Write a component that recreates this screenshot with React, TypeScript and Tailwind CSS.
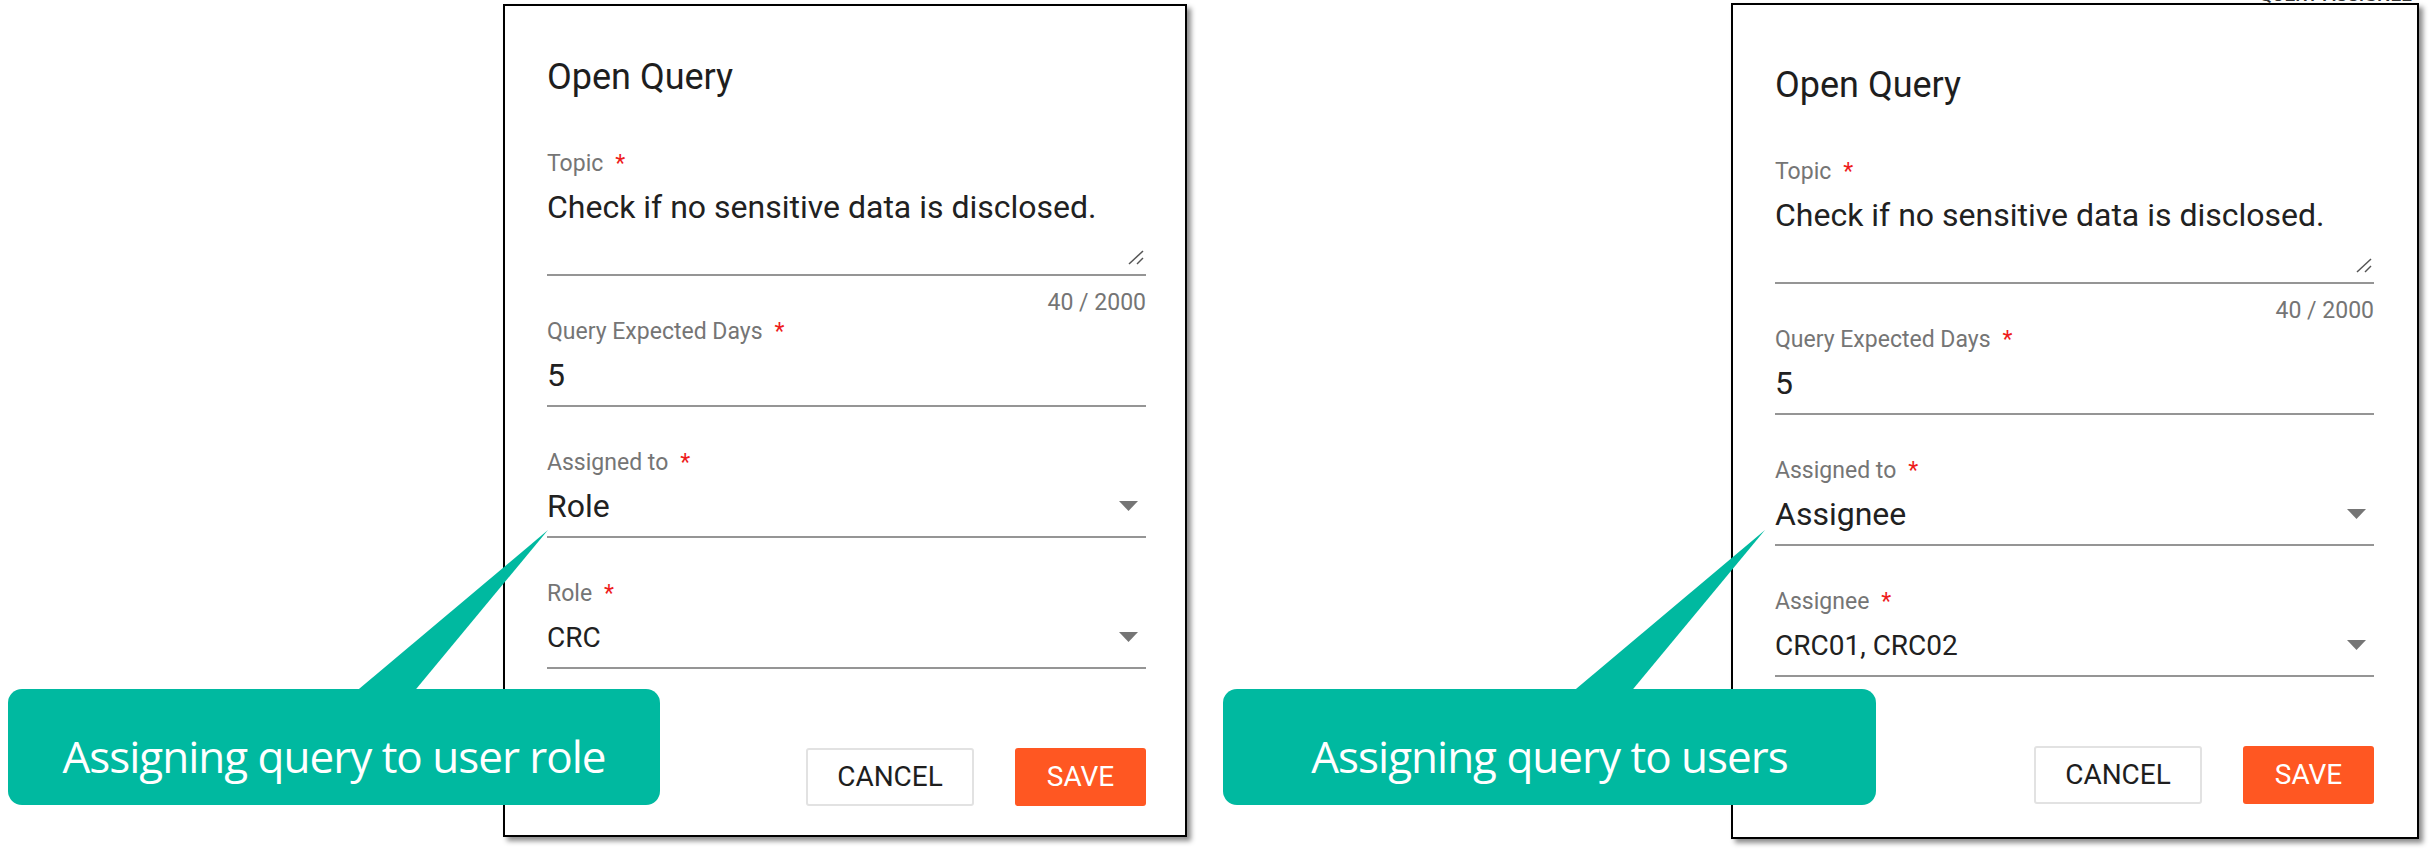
const roboto = "font-['Roboto',_'Liberation_Sans',_sans-serif]";

const Arrow = () => (
  <svg width="19" height="10" viewBox="0 0 19 10" className="mr-[8px] self-center">
    <polygon points="0,0 19,0 9.5,10" fill="#757575" />
  </svg>
);

const Label = ({ text }: { text: string }) => (
  <div className="h-[23px] text-[23px] leading-[23px] text-[#757575]">
    {text}
    <span className="ml-[12px] text-[#ee1c1c]">*</span>
  </div>
);

const Underline = () => <div className="h-[2px] bg-[#959595]" />;

type FieldProps = { label: string; value: string; big?: boolean; select?: boolean };

const Field = ({ label, value, big, select }: FieldProps) => (
  <div className="flex flex-col">
    <Label text={label} />
    <div className="mt-[16px] flex h-[32px] items-start justify-between text-[#212121]">
      <span className={big ? "text-[32px] leading-[32px]" : "text-[28px] leading-[34px]"}>{value}</span>
      {select && <Arrow />}
    </div>
    <div className="mt-[14px]">
      <Underline />
    </div>
  </div>
);

type CardProps = {
  top: string;
  cardClass: string;
  assigned: string;
  second: string;
  secondValue: string;
};

const QueryCard = ({ top, cardClass, assigned, second, secondValue }: CardProps) => (
  <div
    className={`${cardClass} ${top} ${roboto} flex flex-col border-2 border-black bg-white pl-[42px] shadow-[4px_4px_5px_rgba(0,0,0,0.45)]`}
  >
    <h2 className="text-[36px] leading-[36px] font-normal text-[#1e1e1e]">Open Query</h2>

    {/* topic textarea */}
    <div className="mt-[57px] flex flex-col">
      <Label text="Topic" />
      <div className="mt-[16px] h-[32px] text-[32px] leading-[32px] text-[#212121]">
        Check if no sensitive data is disclosed.
      </div>
      <div className="mt-[27px] flex h-[14px] justify-end pr-[2px]">
        <svg width="16" height="15" viewBox="0 0 16 15">
          <line x1="1" y1="14" x2="15" y2="1" stroke="#555" strokeWidth="1.5" />
          <line x1="9" y1="14" x2="15" y2="8" stroke="#555" strokeWidth="1.5" />
        </svg>
      </div>
      <div className="mt-[10px]">
        <Underline />
      </div>
      <div className="mt-[15px] h-[23px] text-right text-[23px] leading-[23px] text-[#757575]">40 / 2000</div>
    </div>

    <div className="mt-[6px] flex flex-col gap-[44px]">
      <Field label="Query Expected Days" value="5" big />
      <Field label="Assigned to" value={assigned} big select />
      <Field label={second} value={secondValue} select />
    </div>

    <div className="flex flex-1 items-start justify-end gap-[41px] pt-[79px]">
      <button className="h-[58px] w-[168px] rounded-[3px] border-2 border-[#e2e2e2] bg-white text-[28px] font-normal text-[#1e1e1e]">
        CANCEL
      </button>
      <button className="h-[58px] w-[131px] rounded-[3px] bg-[#ff5722] text-[28px] font-normal text-white">
        SAVE
      </button>
    </div>
  </div>
);

const Callout = ({ text, box, tail }: { text: string; box: string; tail: string }) => (
  <>
    <svg width="210" height="170" viewBox="0 0 210 170" className={`absolute z-10 ${tail}`}>
      <polygon points="3,168 62,168 198,4" fill="#00b9a0" />
    </svg>
    <div
      className={`absolute z-10 top-[689px] flex h-[116px] justify-center rounded-[14px] bg-[#00b9a0] pt-[45px] ${box}`}
    >
      <span className="font-['Open_Sans',_'Noto_Sans',_sans-serif] text-[44px] leading-[44px] tracking-[-1px] text-white">
        {text}
      </span>
    </div>
  </>
);

export default function App() {
  return (
    <div className="relative flex h-[850px] w-[2430px] overflow-hidden bg-white">
      <div className="relative w-[1187px] shrink-0 pl-[503px] pt-[4px]">
        <QueryCard
          top="pt-[53px]"
          cardClass="h-[833px] w-[684px] pr-[39px]"
          assigned="Role"
          second="Role"
          secondValue="CRC"
        />
        <Callout text="Assigning query to user role" box="left-[8px] w-[652px]" tail="left-[350px] top-[526px]" />
      </div>

      <div className="relative flex-1 pl-[544px] pt-[3px]">
        <div className="absolute right-[18px] top-0 h-[4px] overflow-hidden">
          <div className={`${roboto} -mt-[15px] text-[19px] leading-[20px] font-medium text-[#333]`}>QUERY ASSIGNEE</div>
        </div>
        <QueryCard
          top="pt-[62px]"
          cardClass="h-[836px] w-[688px] pr-[43px] [&>div:last-child]:pt-[69px]"
          assigned="Assignee"
          second="Assignee"
          secondValue="CRC01, CRC02"
        />
        <Callout text="Assigning query to users" box="left-[36px] w-[653px]" tail="left-[380px] top-[526px]" />
      </div>
    </div>
  );
}
